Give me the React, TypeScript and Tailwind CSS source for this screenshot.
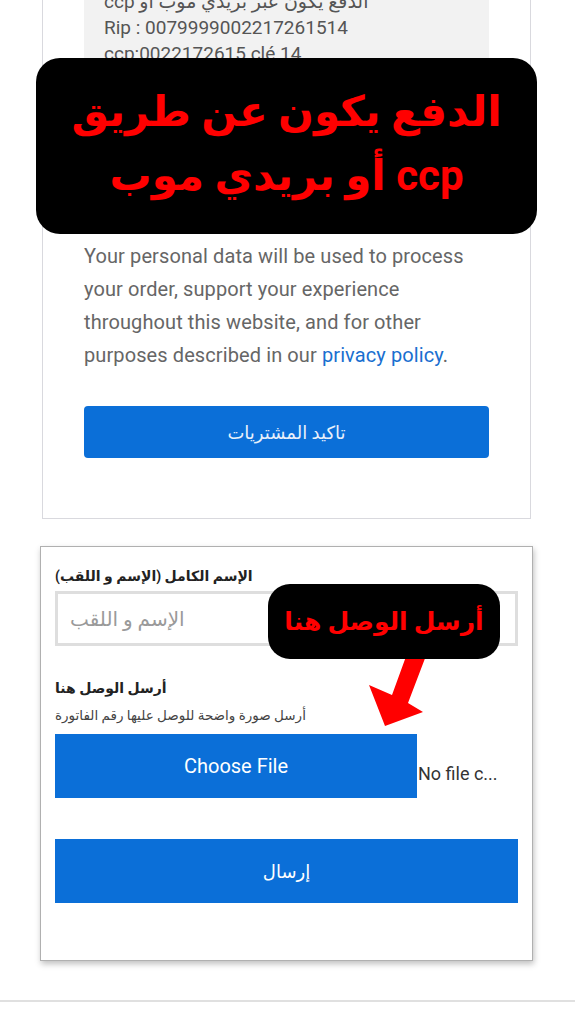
export default function App() {
  return (
    <div className="relative w-[585px] h-[1024px] overflow-hidden bg-white font-['Roboto','DejaVu_Sans',sans-serif]">
      {/* order summary card (scrolled, top cut off) */}
      <div className="-mt-[50px] ml-[42px] w-[489px] border border-[#d9d9de] bg-white px-[41px] pb-[60px]">
        <div className="bg-[#f2f2f2] px-5 pt-[38px] pb-[20px] text-[19px] leading-[26px] text-[#555]">
          <p dir="rtl" className="text-left">الدفع يكون عبر بريدي موب او ccp</p>
          <p>Rip : 0079999002217261514</p>
          <p>ccp:0022172615 clé 14</p>
        </div>
        <p className="mt-[153px] text-[20px] leading-[33px] tracking-[0.1px] text-[#666]">
          Your personal data will be used to process your order, support your experience throughout this website, and for other purposes described in our{' '}
          <span className="text-[#1a6fd0]">privacy policy</span>.
        </p>
        <button className="mt-[34px] flex h-[52px] w-full items-center justify-center rounded-[4px] bg-[#0b6fd8] text-[18px] text-[#e8f0fb]">
          تاكيد المشتريات
        </button>
      </div>

      {/* receipt upload form */}
      <div className="mt-[27px] ml-[40px] w-[493px] border border-[#b0b0b0] bg-white px-[14px] pt-[19px] pb-[57px] shadow-[1px_3px_6px_rgba(0,0,0,0.25)]">
        <p dir="rtl" className="text-left text-[14px] font-bold leading-[20px] text-[#222]">الإسم الكامل (الإسم و اللقب)</p>
        <div className="mt-[5px] flex h-[55px] items-center border-[3px] border-[#dedede] px-3">
          <span dir="rtl" className="text-[20px] text-[#9a9a9a]">الإسم و اللقب</span>
        </div>
        <p dir="rtl" className="mt-[32px] text-left text-[14px] font-bold leading-[20px] text-[#222]">أرسل الوصل هنا</p>
        <p dir="rtl" className="mt-[7px] text-left text-[13.5px] leading-[20px] text-[#444]">أرسل صورة واضحة للوصل عليها رقم الفاتورة</p>
        <div className="mt-[9px] flex items-center">
          <button className="flex h-[64px] w-[362px] items-center justify-center bg-[#0b6fd8] text-[20px] text-white">
            Choose File
          </button>
          <span className="mt-[14px] ml-[1px] whitespace-nowrap text-[18px] text-[#333]">No file c...</span>
        </div>
        <button className="mt-[41px] flex h-[64px] w-full items-center justify-center bg-[#0b6fd8] text-[18px] text-white">
          إرسال
        </button>
      </div>

      <div className="mt-[39px] h-[2px] w-[575px] bg-[#e0e0e0]" />

      {/* overlay callouts */}
      <div
        dir="rtl"
        className="absolute left-[36px] top-[58px] flex h-[176px] w-[501px] flex-col items-center justify-center rounded-[24px] bg-black text-center text-[42px] font-bold leading-[64px] text-[#ff0000]"
      >
        <span className="-mt-[4px]">الدفع يكون عن طريق</span>
        <span>ccp أو بريدي موب</span>
      </div>

      <svg className="absolute left-[360px] top-[640px]" width="75" height="95" viewBox="0 -15 75 95">
        <polygon points="52,-15 72,-15 48,48 63,57 25,71 9,30 32,40" fill="#ff0000" />
      </svg>

      <div
        dir="rtl"
        className="absolute left-[268px] top-[584px] flex h-[75px] w-[232px] items-center justify-center whitespace-nowrap rounded-[22px] bg-black text-[25px] font-bold text-[#ff0000]"
      >
        أرسل الوصل هنا
      </div>
    </div>
  )
}
